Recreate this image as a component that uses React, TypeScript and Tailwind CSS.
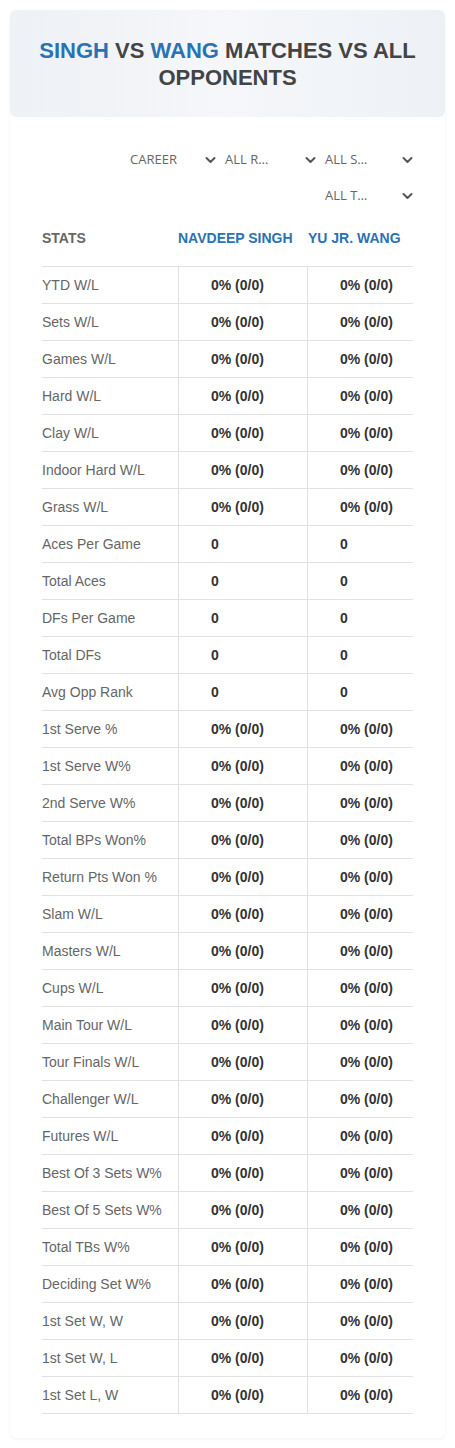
import React from "react";

const pct = "0% (0/0)";
const rows: [string, string][] = [
  ["YTD W/L", pct],
  ["Sets W/L", pct],
  ["Games W/L", pct],
  ["Hard W/L", pct],
  ["Clay W/L", pct],
  ["Indoor Hard W/L", pct],
  ["Grass W/L", pct],
  ["Aces Per Game", "0"],
  ["Total Aces", "0"],
  ["DFs Per Game", "0"],
  ["Total DFs", "0"],
  ["Avg Opp Rank", "0"],
  ["1st Serve %", pct],
  ["1st Serve W%", pct],
  ["2nd Serve W%", pct],
  ["Total BPs Won%", pct],
  ["Return Pts Won %", pct],
  ["Slam W/L", pct],
  ["Masters W/L", pct],
  ["Cups W/L", pct],
  ["Main Tour W/L", pct],
  ["Tour Finals W/L", pct],
  ["Challenger W/L", pct],
  ["Futures W/L", pct],
  ["Best Of 3 Sets W%", pct],
  ["Best Of 5 Sets W%", pct],
  ["Total TBs W%", pct],
  ["Deciding Set W%", pct],
  ["1st Set W, W", pct],
  ["1st Set W, L", pct],
  ["1st Set L, W", pct],
];

function Chevron() {
  return (
    <svg width="11" height="10" viewBox="0 0 11 10" className="text-[#555]">
      <path d="M1.5 3 L5.5 7 L9.5 3" fill="none" stroke="currentColor" strokeWidth="2" strokeLinecap="round" strokeLinejoin="round" />
    </svg>
  );
}

function Select({ label, w }: { label: string; w: string }) {
  return (
    <div className={`flex items-center justify-between ${w} h-[24px]`}>
      <span>{label}</span>
      <Chevron />
    </div>
  );
}

export default function App() {
  return (
    <div className="w-[455px] min-h-[1448px] bg-white p-[10px] font-[family-name:'Liberation_Sans',Arial,sans-serif]">
      <div className="rounded-[6px] shadow-[0_1px_3px_rgba(0,0,0,0.06)] bg-white pb-[24px]">
        <div className="h-[107px] rounded-[6px] bg-gradient-to-r from-[#eef1f5] via-[#f5f7fa] to-[#edf1f6] flex items-center justify-center px-[16px]">
          <h1 className="text-center font-bold text-[22px] leading-[27px] text-[#444] uppercase">
            <span className="text-[#2a72b3]">Singh</span> vs <span className="text-[#2a72b3]">Wang</span> Matches vs All Opponents
          </h1>
        </div>

        <div className="mt-[31px] pl-[116px] pr-[32px] font-[family-name:'Open_Sans',sans-serif] text-[13px] text-[#666] flex flex-wrap justify-end gap-x-[9px] gap-y-[12px]">
          <Select label="CAREER" w="w-[86px]" />
          <Select label="ALL R…" w="w-[91px]" />
          <Select label="ALL S…" w="w-[88px]" />
          <Select label="ALL T…" w="w-[88px]" />
        </div>

        <div className="mt-[3px] mx-[32px]">
          <div className="grid grid-cols-[136px_129px_106px] h-[56px] items-center border-b border-[#e1e1e1] text-[14px] font-bold">
            <div className="text-[#666]">STATS</div>
            <div className="text-[#2a72b3]">NAVDEEP SINGH</div>
            <div className="text-[#2a72b3] pl-[1px]">YU JR. WANG</div>
          </div>
          {rows.map(([label, v]) => (
            <div key={label} className="grid grid-cols-[136px_129px_106px] h-[37px] items-center border-b border-[#e1e1e1] text-[14px]">
              <div className="text-[#666] h-full flex items-center">{label}</div>
              <div className="h-full flex items-center border-l border-[#e1e1e1] pl-[32px] font-bold text-[#333]">{v}</div>
              <div className="h-full flex items-center border-l border-[#e1e1e1] pl-[32px] font-bold text-[#333]">{v}</div>
            </div>
          ))}
        </div>
      </div>
    </div>
  );
}
